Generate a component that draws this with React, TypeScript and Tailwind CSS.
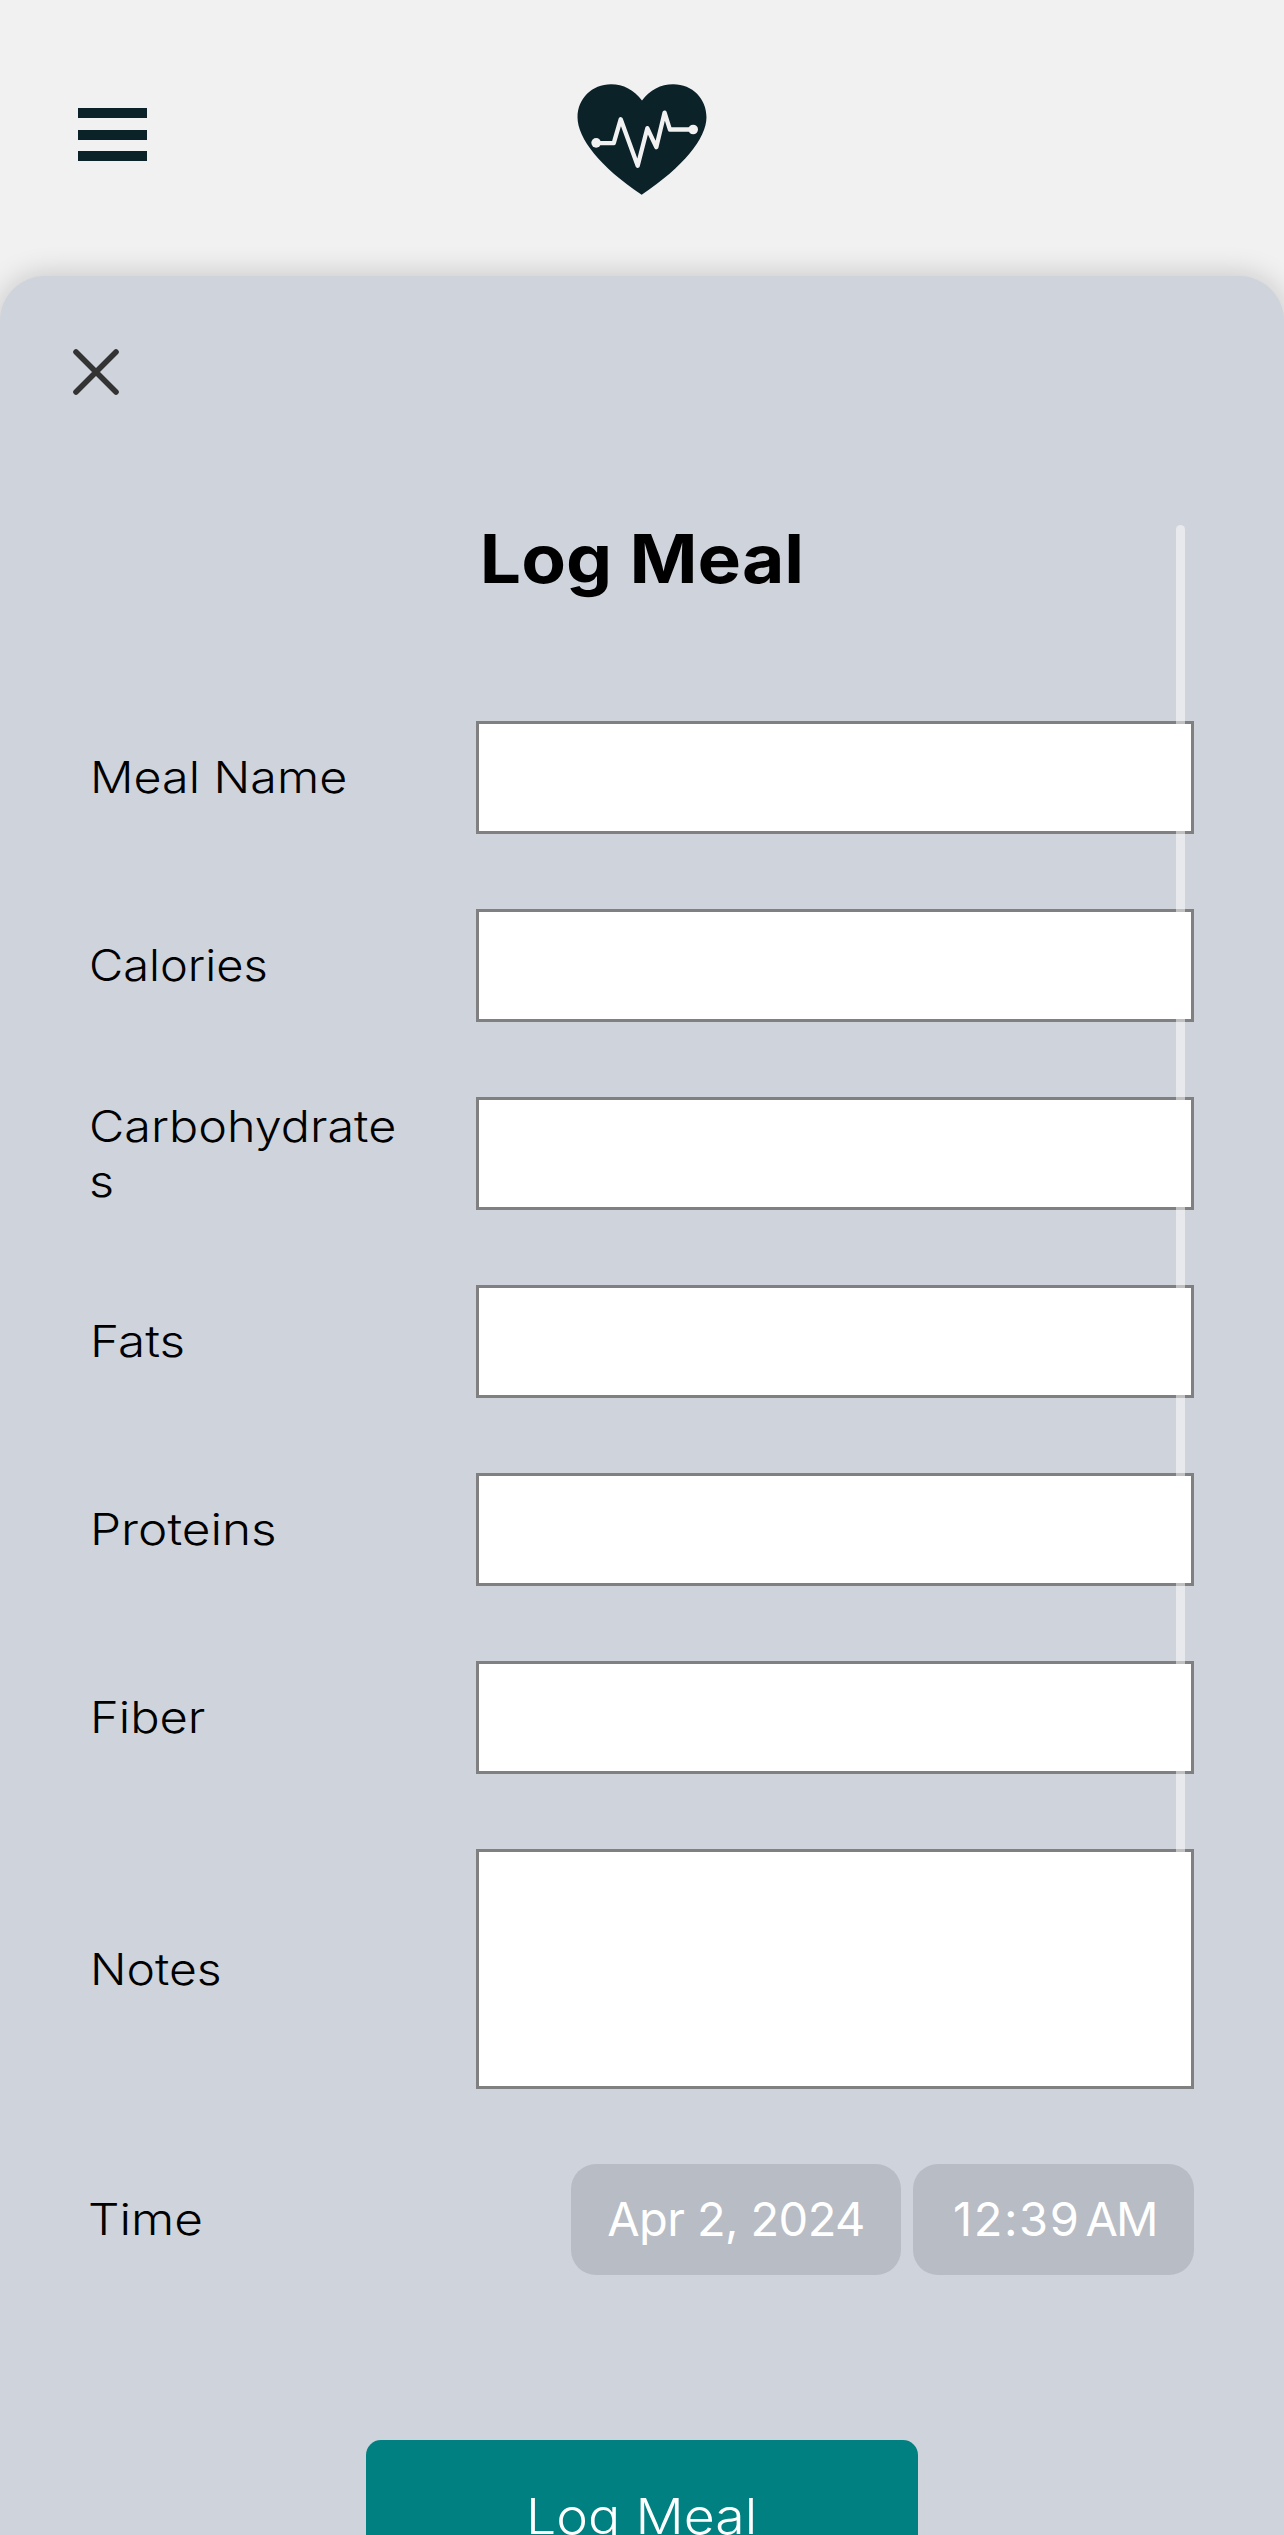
type FieldProps = { label: string; stretch: string; tall?: boolean };

const fields: FieldProps[] = [
  { label: "Meal Name", stretch: "scale-x-[1.1]" },
  { label: "Calories", stretch: "-ml-px scale-x-[1.068]" },
  { label: "Carbohydrates", stretch: "-ml-px scale-x-[1.103]" },
  { label: "Fats", stretch: "scale-x-[1.125]" },
  { label: "Proteins", stretch: "scale-x-[1.125]" },
  { label: "Fiber", stretch: "scale-x-[1.11]" },
  { label: "Notes", stretch: "scale-x-[1.093]", tall: true },
];

function Label({ text, stretch }: { text: string; stretch: string }) {
  return (
    <span className={`block w-[288px] origin-left break-all text-[44px] leading-[55px] [font-weight:350] ${stretch}`}>
      {text}
    </span>
  );
}

function Field({ label, stretch, tall }: FieldProps) {
  return (
    <label className="flex items-center justify-between">
      <Label text={label} stretch={stretch} />
      {tall ? (
        <textarea className="block h-[240px] w-[718px] resize-none border-[3px] border-[#808080] bg-white outline-none" />
      ) : (
        <input className="block h-[113px] w-[718px] border-[3px] border-[#808080] bg-white outline-none" />
      )}
    </label>
  );
}

export default function App() {
  return (
    <div className="flex h-[2535px] w-[1284px] flex-col overflow-hidden bg-[#f1f1f1] font-['Inter',sans-serif] text-black">
      <header className="grid h-[276px] shrink-0 grid-cols-3 items-start px-[78px]">
        <button aria-label="Menu" className="mt-[108px] flex h-[53px] w-[69px] flex-col justify-between">
          <span className="h-[10px] w-full bg-[#0b2228]" />
          <span className="h-[10px] w-full bg-[#0b2228]" />
          <span className="h-[10px] w-full bg-[#0b2228]" />
        </button>
        <svg viewBox="51 72 390 334" className="mt-[84px] h-[111px] w-[130px] justify-self-center">
          <path
            fill="#0b2228"
            d="M246 122C222 90 190 73 153 73C95 73 52 117 52 172C52 235 120 322 245 405C370 322 440 235 440 172C440 117 398 73 340 73C302 73 270 90 246 122Z"
          />
          <path
            d="M108 250H161L182 178L233 318L262 205L289 262L314 158L330 209H400"
            fill="none"
            stroke="#f1f1f1"
            strokeWidth="13"
            strokeLinecap="round"
            strokeLinejoin="round"
          />
          <circle cx="108" cy="249" r="14.5" fill="#f1f1f1" />
          <circle cx="400" cy="209" r="14.5" fill="#f1f1f1" />
        </svg>
      </header>

      <main className="relative grow rounded-t-[45px] bg-[#cfd3db] px-[90px] shadow-[0_0_30px_rgba(0,0,0,0.2)]">
        <button aria-label="Close" className="mt-[73px] -ml-[17px] block h-[46px] w-[46px]">
          <svg viewBox="0 0 46 46" className="h-[46px] w-[46px]">
            <path d="M3 3L43 43M43 3L3 43" stroke="#333333" strokeWidth="5.6" strokeLinecap="round" />
          </svg>
        </button>
        <h1 className="mt-[124px] h-[80px] origin-center scale-x-[1.091] text-center text-[67px] leading-[80px] font-bold">
          Log Meal
        </h1>
        <form className="mt-[122px] flex flex-col gap-[75px]">
          {fields.map((f) => (
            <Field key={f.label} {...f} />
          ))}
          <div className="flex h-[111px] items-center justify-between">
            <Label text="Time" stretch="-ml-[2px] scale-x-[1.125]" />
            <div className="flex gap-[12px] text-[47px] text-white">
              <span className="flex h-[111px] w-[330px] items-center justify-center rounded-[25px] bg-[#b8bcc4] tracking-[-0.6px] whitespace-nowrap">
                Apr 2, 2024
              </span>
              <span className="flex h-[111px] w-[281px] items-center rounded-[25px] bg-[#b8bcc4] pl-[40px] whitespace-nowrap">
                <span className="tracking-[1.6px]">12:39</span>
                <span className="ml-[5px] tracking-[-2px]">AM</span>
              </span>
            </div>
          </div>
        </form>
        <button className="mx-auto mt-[165px] flex h-[154px] w-[552px] items-center justify-center rounded-[15px] bg-[#008080] text-[49px] text-white">
          <span className="block scale-x-[1.094] [font-weight:330]">Log Meal</span>
        </button>
        <div className="absolute top-[249px] right-[99px] h-[1340px] w-[9px] rounded-full bg-white/50" />
      </main>
    </div>
  );
}
